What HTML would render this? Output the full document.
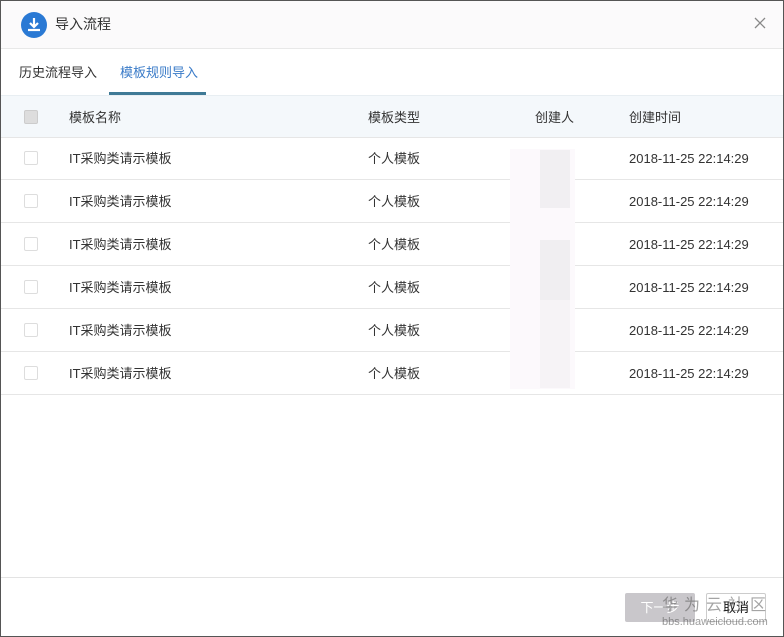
<html><head><style>
body{margin:0;width:784px;height:637px;background:#fff;font-family:"Liberation Sans","Noto Sans CJK SC",sans-serif;font-size:13px;color:#333;position:relative;overflow:hidden}
.frame{position:absolute;left:0;top:0;width:782px;height:635px;border:1px solid #555}
.hdr{position:absolute;left:1px;top:1px;width:782px;height:47px;background:#fbfafb;border-bottom:1px solid #e8e8e8}
.ic{position:absolute;left:20px;top:11px;width:26px;height:26px;border-radius:50%;background:#2a79d4}
.t{position:absolute;font-size:14px;line-height:20px}
.row{position:absolute;left:1px;width:782px;height:42px;border-bottom:1px solid #e6e6e6;line-height:44px}
.cb{position:absolute;left:23px;top:14px;width:12px;height:12px;border:1px solid #ddd;border-radius:2px;background:#fff}
.c{position:absolute;top:0;white-space:nowrap}
</style></head><body>
<div class="frame"></div>
<div class="hdr">
<div class="ic"><svg width="26" height="26" viewBox="0 0 26 26"><path d="M13 6v9M9 11l4 4 4-4" stroke="#fff" stroke-width="2.2" fill="none"/><path d="M7 18h12" stroke="#fff" stroke-width="2.2"/></svg></div>
<div class="t" style="left:54px;top:13px;color:#333">导入流程</div>
<svg style="position:absolute;left:753px;top:16px" width="12" height="12"><path d="M1 1L11 11M11 1L1 11" stroke="#888" stroke-width="1.3"/></svg>
</div>
<div class="t" style="left:19px;top:63px;font-size:13px">历史流程导入</div>
<div class="t" style="left:120px;top:63px;font-size:13px;color:#3a7bc8">模板规则导入</div>
<div style="position:absolute;left:109px;top:92px;width:97px;height:3px;background:#3f7a96"></div>
<div class="row" style="top:95px;height:41px;line-height:43px;background:#f4f8fb;border-top:1px solid #e8eef2">
<div class="cb" style="background:#ddd;border-color:#ccc"></div>
<div class="c" style="left:68px">模板名称</div><div class="c" style="left:367px">模板类型</div><div class="c" style="left:534px">创建人</div><div class="c" style="left:628px">创建时间</div></div>
<div class="row" style="top:137px"><div class="cb"></div><div class="c" style="left:68px">IT采购类请示模板</div><div class="c" style="left:367px">个人模板</div><div class="c" style="left:628px">2018-11-25 22:14:29</div></div>
<div class="row" style="top:180px"><div class="cb"></div><div class="c" style="left:68px">IT采购类请示模板</div><div class="c" style="left:367px">个人模板</div><div class="c" style="left:628px">2018-11-25 22:14:29</div></div>
<div class="row" style="top:223px"><div class="cb"></div><div class="c" style="left:68px">IT采购类请示模板</div><div class="c" style="left:367px">个人模板</div><div class="c" style="left:628px">2018-11-25 22:14:29</div></div>
<div class="row" style="top:266px"><div class="cb"></div><div class="c" style="left:68px">IT采购类请示模板</div><div class="c" style="left:367px">个人模板</div><div class="c" style="left:628px">2018-11-25 22:14:29</div></div>
<div class="row" style="top:309px"><div class="cb"></div><div class="c" style="left:68px">IT采购类请示模板</div><div class="c" style="left:367px">个人模板</div><div class="c" style="left:628px">2018-11-25 22:14:29</div></div>
<div class="row" style="top:352px"><div class="cb"></div><div class="c" style="left:68px">IT采购类请示模板</div><div class="c" style="left:367px">个人模板</div><div class="c" style="left:628px">2018-11-25 22:14:29</div></div>
<div style="position:absolute;left:510px;top:149px;width:65px;height:240px;background:#fcf9fc"></div>
<div style="position:absolute;left:540px;top:150px;width:30px;height:58px;background:#f1eff2"></div>
<div style="position:absolute;left:540px;top:240px;width:30px;height:60px;background:#f0eef1"></div>
<div style="position:absolute;left:540px;top:300px;width:30px;height:88px;background:#f6f3f6"></div>
<div style="position:absolute;left:1px;top:577px;width:782px;height:1px;background:#e3e3e3"></div>
<div style="position:absolute;left:625px;top:593px;width:70px;height:29px;background:#c9c7cb;border-radius:2px;color:#fff;text-align:center;line-height:29px">下一步</div>
<div style="position:absolute;left:706px;top:593px;width:58px;height:27px;border:1px solid #ccc;border-radius:2px;text-align:center;line-height:27px;color:#111">取消</div>
<div style="position:absolute;left:662px;top:596px;font-size:16px;line-height:20px;white-space:nowrap;color:rgba(90,90,90,.55);letter-spacing:6px">华为云社区</div>
<div style="position:absolute;left:662px;top:616px;font-size:11px;line-height:13px;white-space:nowrap;color:rgba(90,90,90,.6)">bbs.huaweicloud.com</div>
</body></html>
